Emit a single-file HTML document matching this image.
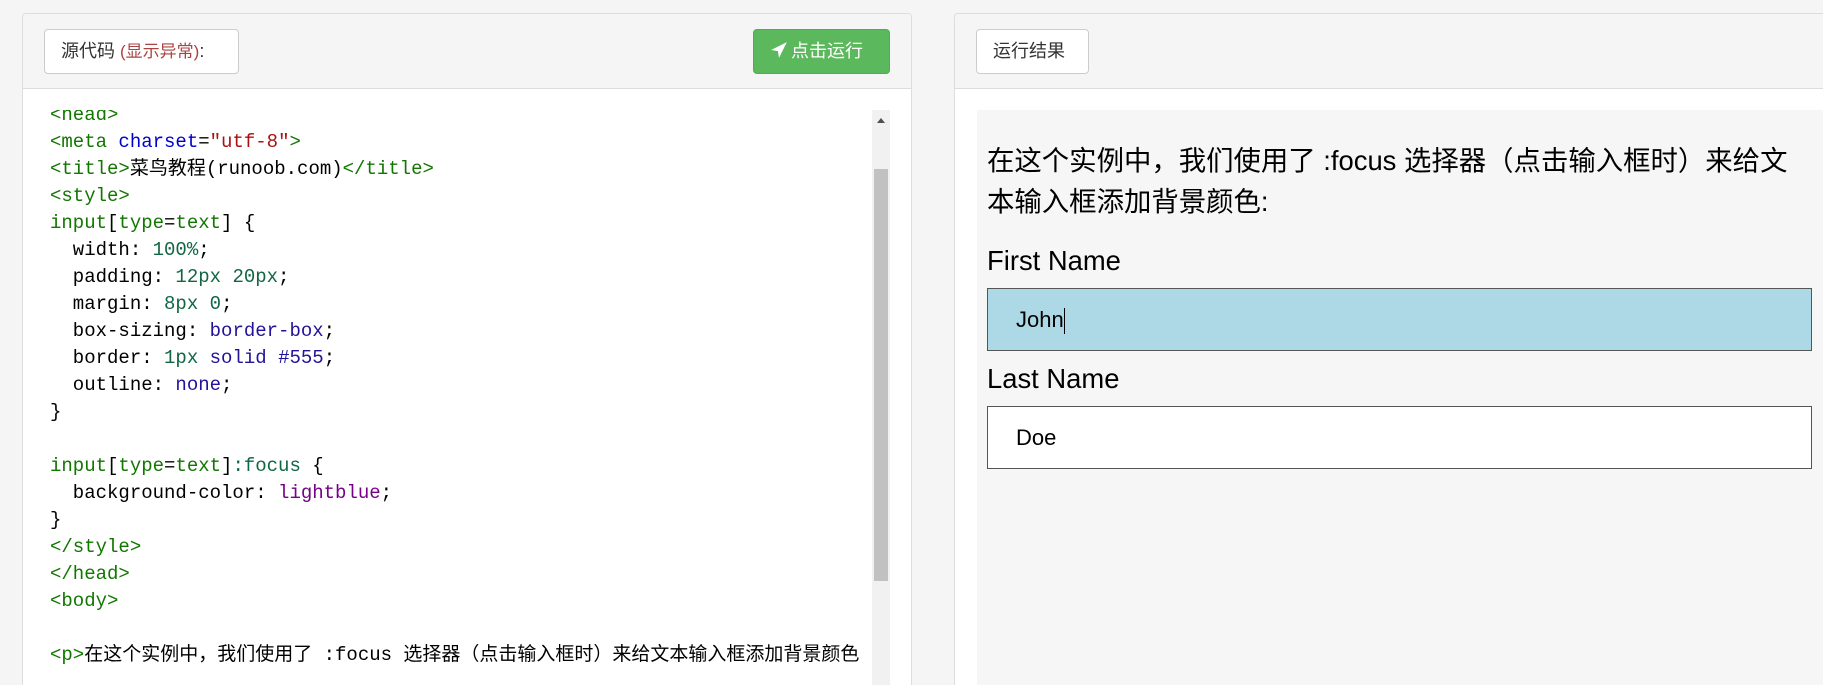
<!DOCTYPE html>
<html><head><meta charset="utf-8"><style>
*{box-sizing:border-box;margin:0;padding:0}
html,body{width:1823px;height:685px;overflow:hidden}
body{background:#f5f5f5;position:relative;font-family:"Liberation Sans","Noto Sans CJK SC",sans-serif}
.panel{position:absolute;top:13px;height:672px;background:#fff;border:1px solid #ddd;border-bottom:none;border-radius:4px 4px 0 0;overflow:hidden}
.hdr{position:absolute;left:0;right:0;top:0;height:75px;background:#f5f5f5;border-bottom:1px solid #ddd}
.btn{position:absolute;top:15px;height:45px;border:1px solid #ccc;border-radius:4px;background:#fff;font-size:18px;color:#333;line-height:43px;padding:0 16px;white-space:nowrap}
.code{position:absolute;left:0;top:96px;width:850px;height:576px;overflow:hidden}
.code pre{position:absolute;left:27px;top:-8px;font-family:"Liberation Mono","Noto Sans CJK SC",monospace;font-size:19px;line-height:27px;color:#000}
.t{color:#170}.a{color:#00c}.s{color:#a11}.n{color:#164}.at{color:#219}.k{color:#708}
.res{position:absolute;left:22px;top:96px;width:900px;height:576px;background:#f6f6f6}
.res p{position:absolute;left:10px;top:30px;width:812px;font-size:27.4px;line-height:41px;color:#000}
.lab{position:absolute;left:10px;font-size:27.4px;color:#000}
.inp{position:absolute;left:10px;width:825px;height:63px;border:1px solid #555;font-size:22px;padding-left:28px;line-height:61px;color:#000}
</style></head><body>
<div class="panel" style="left:22px;width:890px">
 <div class="hdr">
  <div class="btn" style="left:21px;width:195px">源代码 <span style="color:#a94442;font-size:17px">(显示异常)</span>:</div>
  <div class="btn" style="left:730px;width:137px;background:#5cb85c;border-color:#4cae4c;color:#fff;padding:0 0 0 16px"><svg width="18" height="18" viewBox="0 0 16 16" style="vertical-align:-2px;margin-right:3px"><path d="M15 1 L1 8 L7 9 L8 15 Z" fill="#fff"/></svg>点击运行</div>
 </div>
 <div class="code"><pre><span class="t">&lt;head&gt;</span>
<span class="t">&lt;meta</span> <span class="a">charset</span>=<span class="s">"utf-8"</span><span class="t">&gt;</span>
<span class="t">&lt;title&gt;</span>菜鸟教程(runoob.com)<span class="t">&lt;/title&gt;</span>
<span class="t">&lt;style&gt;</span>
<span class="t">input</span>[<span class="t">type</span>=<span class="t">text</span>] {
  width: <span class="n">100%</span>;
  padding: <span class="n">12px</span> <span class="n">20px</span>;
  margin: <span class="n">8px</span> <span class="n">0</span>;
  box-sizing: <span class="at">border-box</span>;
  border: <span class="n">1px</span> <span class="at">solid</span> <span class="at">#555</span>;
  outline: <span class="at">none</span>;
}

<span class="t">input</span>[<span class="t">type</span>=<span class="t">text</span>]<span class="n">:focus</span> {
  background-color: <span class="k">lightblue</span>;
}
<span class="t">&lt;/style&gt;</span>
<span class="t">&lt;/head&gt;</span>
<span class="t">&lt;body&gt;</span>

<span class="t">&lt;p&gt;</span>在这个实例中，我们使用了 :focus 选择器（点击输入框时）来给文本输入框添加背景颜色</pre></div>
 <div style="position:absolute;left:849px;top:96px;width:18px;height:576px;background:#f1f1f1">
  <div style="position:absolute;left:5px;top:8px;width:0;height:0;border-left:4px solid transparent;border-right:4px solid transparent;border-bottom:5px solid #505050"></div>
  <div style="position:absolute;left:2px;top:59px;width:14px;height:412px;background:#c1c1c1"></div>
 </div>
</div>
<div class="panel" style="left:954px;width:869px;border-right:none;border-radius:4px 0 0 0">
 <div class="hdr">
  <div class="btn" style="left:21px;width:113px">运行结果</div>
 </div>
 <div class="res">
  <p>在这个实例中，我们使用了 :focus 选择器（点击输入框时）来给文本输入框添加背景颜色:</p>
  <div class="lab" style="top:135px">First Name</div>
  <div class="inp" style="top:178px;background:#add8e6">John<span style="display:inline-block;width:1px;height:26px;background:#000;vertical-align:middle"></span></div>
  <div class="lab" style="top:253px">Last Name</div>
  <div class="inp" style="top:296px;background:#fff">Doe</div>
 </div>
</div>
</body></html>
